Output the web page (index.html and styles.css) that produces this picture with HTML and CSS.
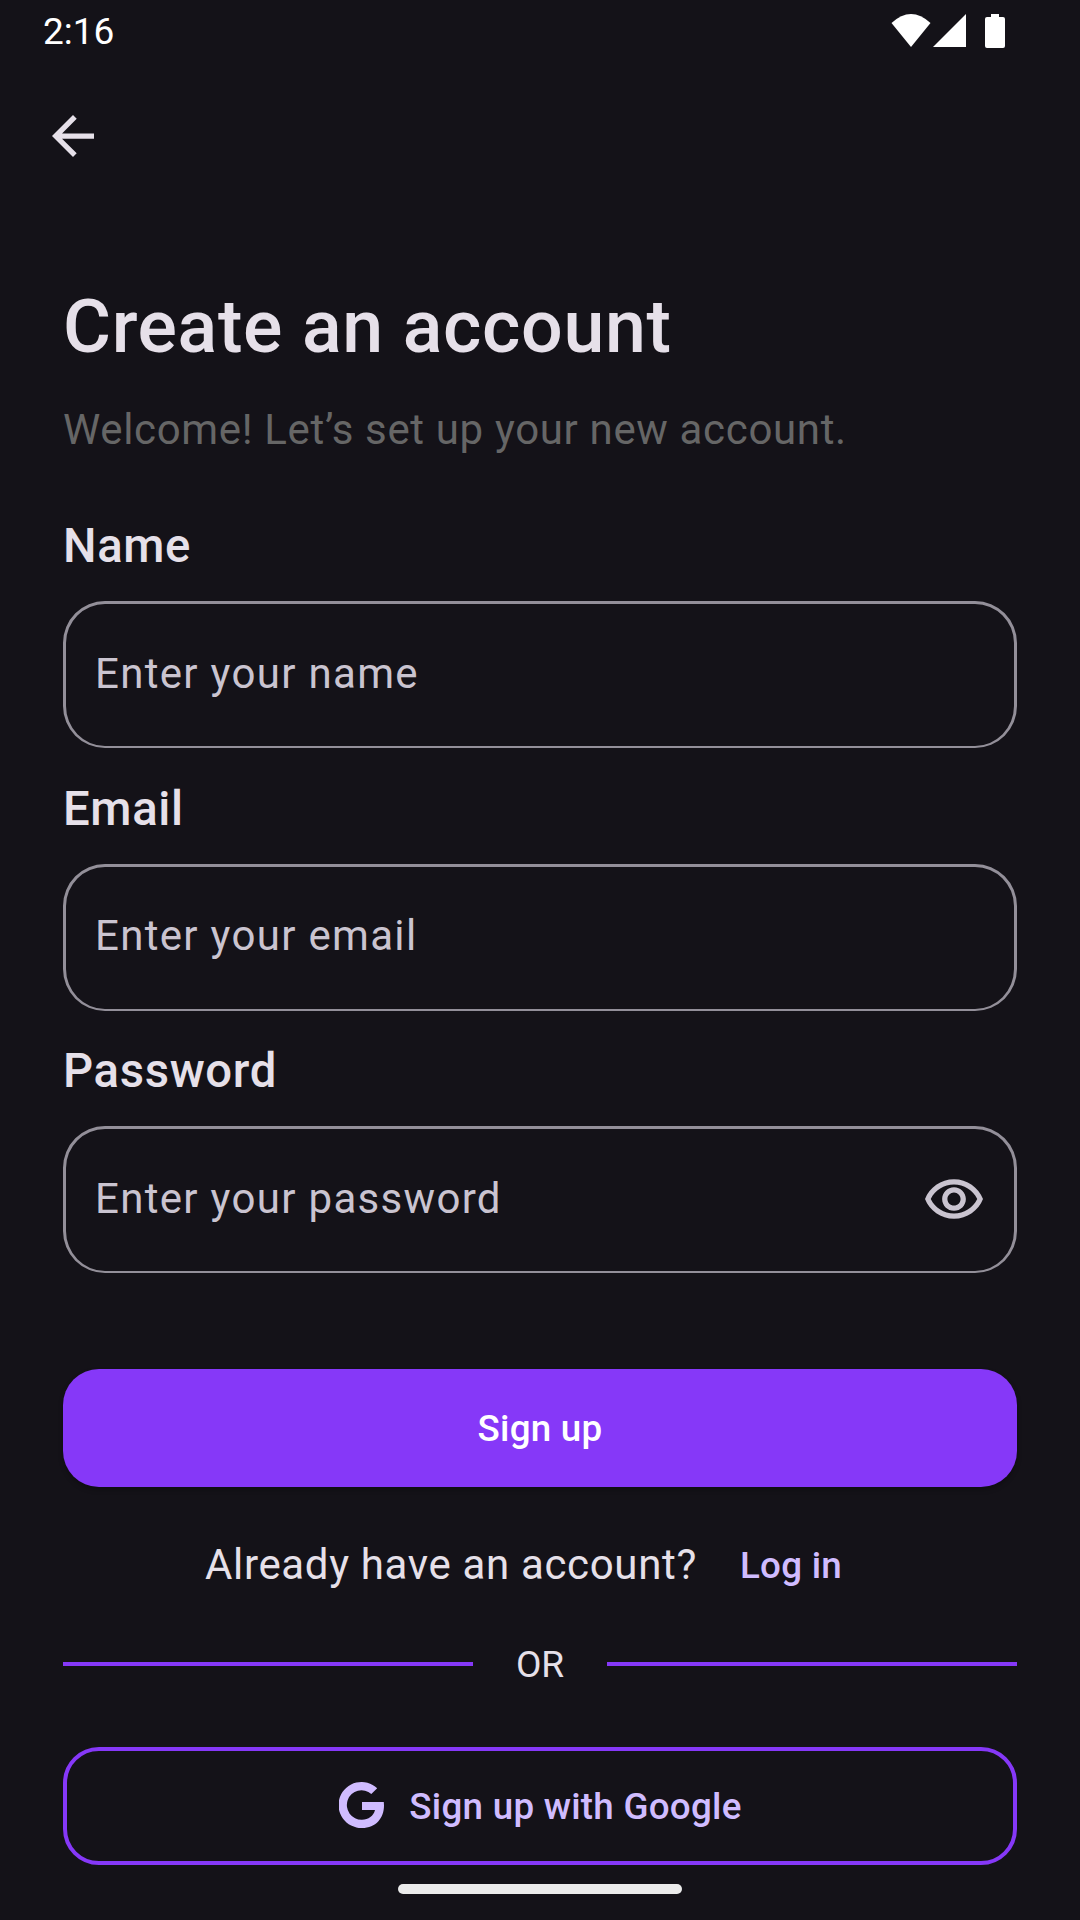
FILE: index.html
```html
<!DOCTYPE html>
<html lang="en">
<head>
<meta charset="utf-8">
<title>Create an account</title>
<link rel="stylesheet" href="styles.css">
</head>
<body>
<div class="status">
  <span class="clock">2:16</span>
  <div class="status-icons">
    <svg class="wifi" viewBox="0 0 40 33"><path d="M.5 9Q20-9 39.500 9L20 33Z"/></svg>
    <svg class="signal" viewBox="0 0 33 33"><path d="M33 0V33H0Z"/></svg>
    <svg class="battery" viewBox="0 0 20 34"><path d="M6 0H14V3H18Q20 3 20 5V32Q20 34 18 34H2Q0 34 0 32V5Q0 3 2 3H6Z"/></svg>
  </div>
</div>
<header class="topbar">
  <svg class="back" viewBox="4 4 16 16"><path d="M20 11H7.83l5.59-5.59L12 4l-8 8 8 8 1.41-1.41L7.83 13H20v-2z"/></svg>
</header>
<main class="content">
  <h1 class="title">Create an account</h1>
  <p class="subtitle">Welcome! Let’s set up your new account.</p>
  <form class="form">
    <div class="field"><div class="label">Name</div><div class="input"><span class="placeholder">Enter your name</span></div></div>
    <div class="field"><div class="label">Email</div><div class="input"><span class="placeholder">Enter your email</span></div></div>
    <div class="field"><div class="label">Password</div><div class="input"><span class="placeholder">Enter your password</span>
      <svg class="eye" viewBox="1 4 22 15"><path d="M12 6c3.79 0 7.17 2.13 8.82 5.5C19.17 14.87 15.79 17 12 17s-7.17-2.13-8.82-5.5C4.83 8.13 8.21 6 12 6m0-2C7 4 2.73 7.11 1 11.5 2.73 15.89 7 19 12 19s9.27-3.11 11-7.5C21.27 7.11 17 4 12 4zm0 5c1.38 0 2.5 1.12 2.5 2.5S13.38 14 12 14s-2.5-1.12-2.5-2.5S10.62 9 12 9m0-2c-2.48 0-4.5 2.02-4.5 4.5S9.52 16 12 16s4.5-2.02 4.5-4.5S14.480 7 12 7z"/></svg></div></div>
  </form>
  <div class="button primary"><span>Sign up</span></div>
  <div class="login"><span class="question">Already have an account?</span><span class="link">Log in</span></div>
  <div class="divider"><span class="or">OR</span></div>
  <div class="button google">
    <svg class="g" viewBox="0 0 46 46"><path d="M44.800 20H23V28H36C34.500 34 29.500 37.700 23 37.700A14.700 14.700 0 1 1 32.300 12L38.200 6.200A23 23 0 1 0 23 46C37 46 45 36 45 23.500Z"/></svg>
    <span>Sign up with Google</span>
  </div>
</main>
<div class="home"></div>
</body>
</html>
```
FILE: styles.css
```css
* { box-sizing: border-box; }
body { margin: 0; width: 1080px; height: 1920px; overflow: hidden; display: flex; flex-direction: column; background: #141218; color: #e6e0e9; font-family: Roboto, sans-serif; }
svg { display: block; flex: none; }
.status { height: 63px; flex: none; display: flex; justify-content: space-between; padding: 0 75px 0 43px; color: #fff; font-size: 37px; line-height: 63px; }
.status-icons { display: flex; padding-top: 14px; fill: #fff; }
.wifi { width: 40px; height: 33px; }
.signal { width: 33px; height: 33px; margin-left: 2px; }
.battery { width: 20px; height: 34px; margin-left: 19px; }
.topbar { height: 147px; flex: none; padding: 52.400px 52.400px 0; }
.back { width: 42px; height: 42px; fill: #e6e0e9; }
.content { padding: 65px 63px 0; flex: none; height: 1655px; }
.title { margin: 0; height: 105px; font-size: 73.500px; line-height: 105px; font-weight: 500; letter-spacing: 0.656px; }
.subtitle { margin: 18px 0 0; height: 63px; font-size: 42px; line-height: 63px; letter-spacing: 0.656px; color: #666; }
.form { margin-top: 52px; display: grid; gap: 30px; }
.field { height: 232.500px; }
.label { height: 63px; line-height: 66px; font-size: 47.250px; font-weight: 500; letter-spacing: 0.656px; }
.input { margin-top: 25px; height: 147px; border: 3px solid #938f99; border-bottom-width: 2px; border-radius: 42px; display: flex; align-items: center; justify-content: space-between; padding: 0 30px 0 29px; color: #cac4d0; font-size: 42px; letter-spacing: 1.312px; }
.placeholder { margin-top: -4px; }
.eye { width: 58px; height: 40px; margin: -3px 1px 0 0; fill: #cac4d0; }
.button { height: 118px; border-radius: 36px; display: flex; align-items: center; justify-content: center; font-size: 36.750px; font-weight: 500; letter-spacing: 0.262px; }
.primary { margin-top: 98.500px; background: #8638f8; color: #fff; box-shadow: 0 3px 5px rgba(0, 0, 0, 0.25); }
.login { margin-top: 46px; height: 63px; padding-right: 33px; display: flex; align-items: center; justify-content: center; }
.question { font-size: 42px; letter-spacing: 0.656px; }
.link { margin: 2px 0 0 43px; font-size: 36.750px; font-weight: 500; letter-spacing: 0.262px; color: #d0bcff; }
.divider { margin-top: 36px; height: 64px; display: flex; align-items: center; gap: 43px; font-size: 37px; }
.divider::before, .divider::after { content: ""; height: 4px; flex: 1; background: #8638f8; }
.google { margin-top: 51px; border: 4px solid #8638f8; color: #d0bcff; }
.g { width: 46px; height: 46px; fill: #d0bcff; margin: -2px 24.500px 0 0.500px; }
.home { flex: none; width: 284px; height: 10px; border-radius: 5px; margin: 19px auto 0; background: #ebebeb; }
```
